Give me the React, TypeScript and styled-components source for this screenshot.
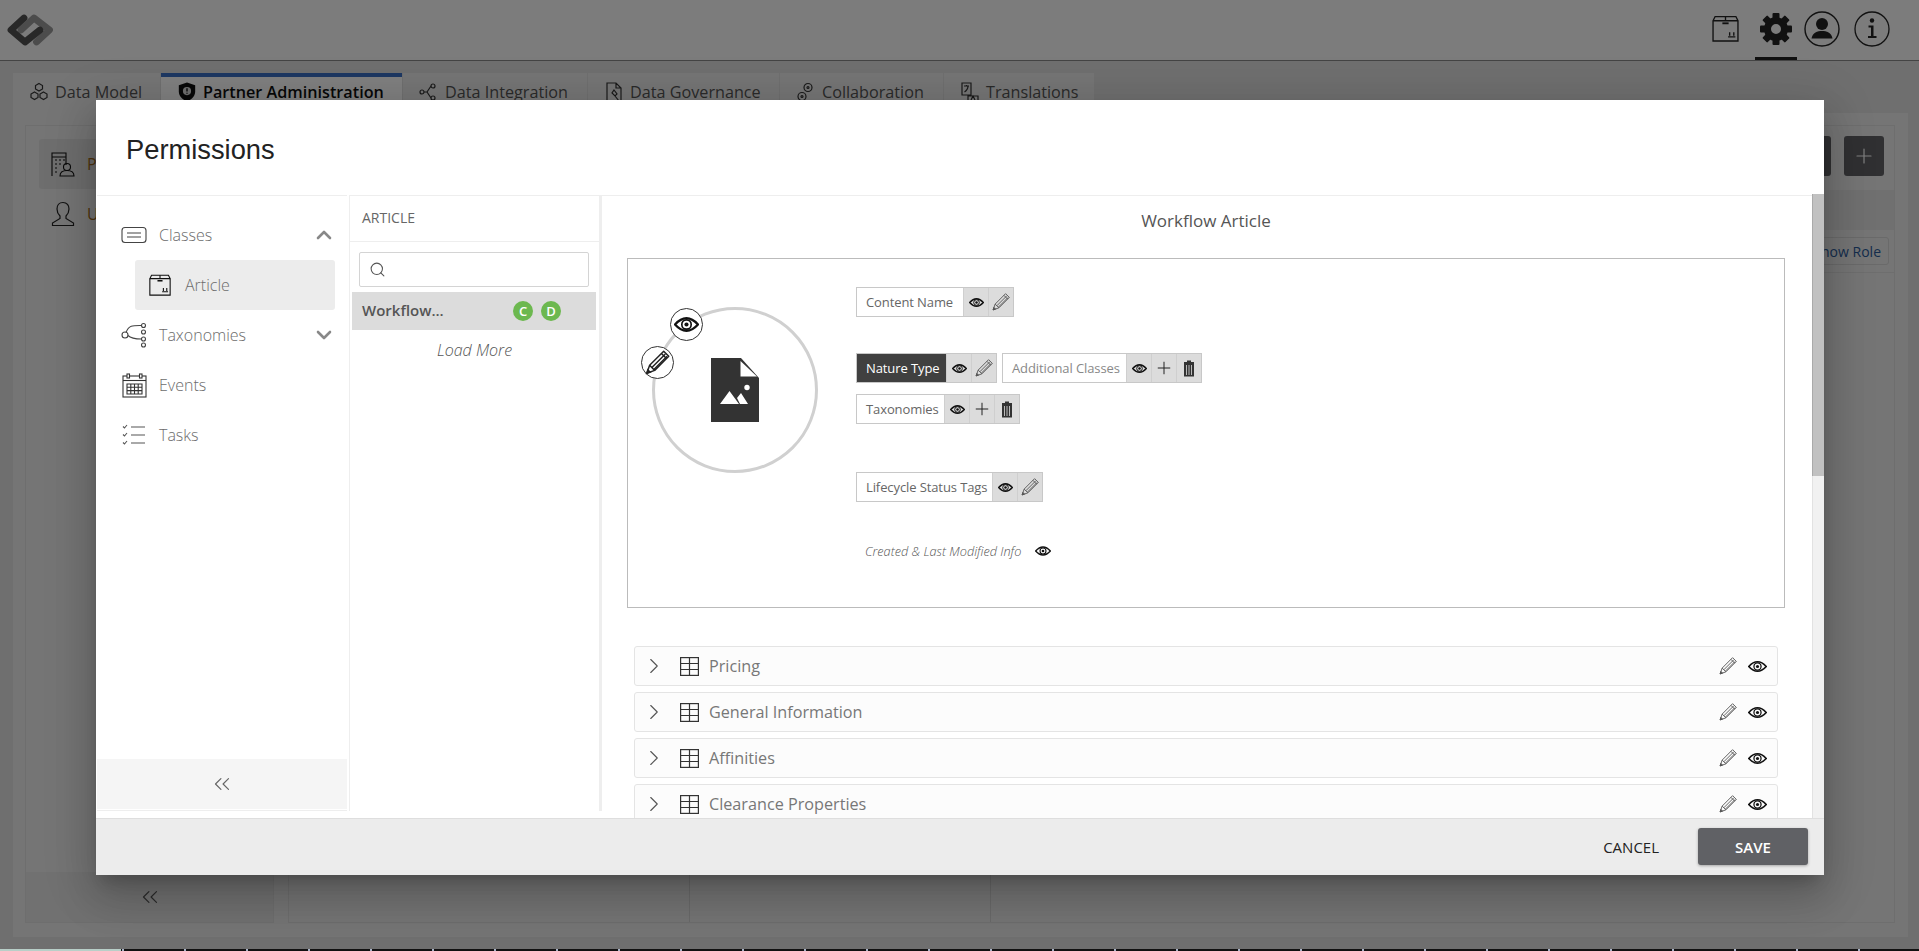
import React from 'react';
import styled, { createGlobalStyle } from 'styled-components';
import { ChevronDown, ChevronRight, ChevronUp, ChevronsLeft, Plus, Search } from 'lucide-react';

const GlobalStyle = createGlobalStyle`
  html, body {
    margin: 0;
    padding: 0;
    height: 100%;
    overflow: hidden;
    background: #fff;
    font-family: "Open Sans", "Liberation Sans", sans-serif;
  }
  * { box-sizing: border-box; }
`;

/* ---------- page behind the dialog ---------- */

const Page = styled.div`
  position: relative;
  width: 1919px;
  height: 951px;
  overflow: hidden;
`;

const Backdrop = styled.div`
  height: 949px;
  background-color: #dedede;
  display: flex;
  flex-direction: column;
`;

const BottomStrip = styled.div`
  height: 2px;
  background:
    linear-gradient(90deg, #b8cfc8 0 121px, transparent 121px),
    repeating-linear-gradient(90deg, #111 0 60px, #aab4c8 60px 62px);
`;

const Overlay = styled.div`
  position: absolute;
  left: 0;
  top: 0;
  width: 100%;
  height: 949px;
  background: rgba(0, 0, 0, 0.5);
`;

const TopBar = styled.header`
  height: 61px;
  flex: none;
  background-color: #f9f9f9;
  border-bottom: 1px solid #888;
  display: flex;
  align-items: center;
  justify-content: space-between;
  padding: 0 26px 0 7px;
`;

const TopIcons = styled.div`
  display: flex;
  align-items: center;
`;

const TopIcon = styled.div<{ $active?: boolean; $w: number }>`
  width: ${p => p.$w}px;
  height: 60px;
  display: flex;
  align-items: center;
  justify-content: center;
  color: #222;
  border-bottom: 3px solid ${p => (p.$active ? '#222' : 'transparent')};
`;

const TabRow = styled.nav`
  display: flex;
  flex: none;
  margin: 12px 0 0 13px;
  height: 40px;
`;

const Tab = styled.div<{ $active?: boolean; $w: number }>`
  width: ${p => p.$w}px;
  margin-right: 1px;
  display: flex;
  align-items: center;
  gap: 6px;
  padding: 0 0 7px 16px;
  font-size: 16.2px;
  font-weight: ${p => (p.$active ? 600 : 400)};
  color: ${p => (p.$active ? '#111' : '#555')};
  background-color: ${p => (p.$active ? '#fff' : '#ebebeb')};
  border-top: 4px solid ${p => (p.$active ? '#3a6fc4' : '#ebebeb')};
  white-space: nowrap;
`;

const Panel = styled.main`
  flex: 1;
  margin: 0 11px 12px 13px;
  padding: 12px 13px 14px 12px;
  background-color: #ebebeb;
  display: flex;
  gap: 14px;
`;

const SideColumn = styled.aside`
  width: 249px;
  border: 1px solid #dcdcdc;
  display: flex;
  flex-direction: column;
  padding: 13px 13px 0;
`;

const SideItem = styled.div<{ $active?: boolean }>`
  height: 50px;
  display: flex;
  align-items: center;
  gap: 12px;
  padding-left: 12px;
  font-size: 16px;
  color: #a06a20;
  border-radius: 3px;
  background-color: ${p => (p.$active ? '#dcdcdc' : 'transparent')};
`;

const SideCollapse = styled.div`
  margin: auto -13px 0;
  height: 50px;
  display: flex;
  align-items: center;
  justify-content: center;
  background-color: #e2e2e2;
  color: #555;
`;

const ContentColumn = styled.section`
  flex: 1;
  border: 1px solid #dcdcdc;
  display: flex;
  flex-direction: column;
`;

const Toolbar = styled.div`
  height: 64px;
  display: flex;
  justify-content: flex-end;
  align-items: center;
  gap: 13px;
  padding: 0 10px 4px 0;
`;

const DarkButton = styled.div`
  width: 40px;
  height: 40px;
  border-radius: 3px;
  background-color: #606165;
  color: #fff;
  display: flex;
  align-items: center;
  justify-content: center;
`;

const TableHead = styled.div`
  height: 40px;
  background-color: #e0e0e0;
`;

const TableRow = styled.div`
  height: 43px;
  display: flex;
  align-items: center;
  justify-content: flex-end;
  padding-right: 5px;
  border-bottom: 1px solid #dcdcdc;
`;

const ShowRole = styled.div`
  height: 28px;
  padding: 0 7px;
  display: flex;
  align-items: center;
  font-size: 14px;
  color: #2a5a9a;
  border: 1px solid #d4d4d4;
  border-radius: 3px;
`;

const TableBody = styled.div`
  flex: 1;
  display: grid;
  grid-template-columns: 401px 301px 1fr;
`;

const TableCell = styled.div`
  border-right: 1px solid #d4d4d4;
  &:last-child { border-right: none; }
`;

/* ---------- dialog ---------- */

const Modal = styled.div`
  position: absolute;
  left: 96px;
  top: 100px;
  width: 1728px;
  height: 775px;
  background-color: #fff;
  display: flex;
  flex-direction: column;
  box-shadow: 0 11px 15px -7px rgba(0, 0, 0, 0.2), 0 24px 38px 3px rgba(0, 0, 0, 0.14), 0 9px 46px 8px rgba(0, 0, 0, 0.12);
`;

const ModalHeader = styled.div`
  height: 95px;
  flex: none;
  display: flex;
  align-items: center;
  padding: 5px 0 0 30px;
  font-family: "Liberation Sans", Arial, sans-serif;
  font-size: 27.3px;
  color: #222;
`;

const ModalBody = styled.div`
  flex: 1;
  min-height: 0;
  display: flex;
`;

const ModalFooter = styled.div`
  height: 57px;
  flex: none;
  background-color: #ececec;
  border-top: 1px solid #dedede;
  display: flex;
  align-items: center;
  justify-content: flex-end;
  padding: 0 16px 1px 0;
`;

const CancelButton = styled.div`
  font-size: 15px;
  color: #222;
  margin-right: 39px;
`;

const SaveButton = styled.div`
  width: 110px;
  height: 37px;
  border-radius: 3px;
  background-color: #606165;
  color: #fff;
  font-size: 15px;
  font-weight: 600;
  display: flex;
  align-items: center;
  justify-content: center;
  box-shadow: 0 1px 3px rgba(0, 0, 0, 0.3);
`;

const NavColumn = styled.div`
  width: 250px;
  margin-left: 1px;
  margin-bottom: 7px;
  flex: none;
  border-top: 1px solid #eee;
  border-bottom: 1px solid #eee;
  display: flex;
  flex-direction: column;
  padding-top: 14px;
`;

const NavItem = styled.div`
  height: 50px;
  flex: none;
  display: flex;
  align-items: center;
  padding: 0 11px 0 24px;
  font-size: 16px;
  font-weight: 300;
  color: #6c6c6c;
  gap: 12px;
`;

const NavIconSlot = styled.span`
  width: 26px;
  display: flex;
  justify-content: center;
`;

const NavLabel = styled.span`
  flex: 1;
`;

const NavSubItem = styled.div`
  height: 50px;
  flex: none;
  margin-left: 38px;
  margin-right: 12px;
  border-radius: 3px;
  background-color: #ececec;
  display: flex;
  align-items: center;
  gap: 14px;
  padding-left: 14px;
  font-size: 16px;
  font-weight: 300;
  color: #6c6c6c;
`;

const NavCollapse = styled.div`
  margin-top: auto;
  margin-bottom: 1px;
  height: 50px;
  flex: none;
  background-color: #f5f5f5;
  display: flex;
  align-items: center;
  justify-content: center;
  color: #666;
`;

const ListColumn = styled.div`
  width: 250px;
  margin-left: 2px;
  margin-bottom: 7px;
  flex: none;
  border-left: 1px solid #eee;
  border-top: 1px solid #eee;
  display: flex;
  flex-direction: column;
`;

const ListHeader = styled.div`
  height: 46px;
  flex: none;
  display: flex;
  align-items: center;
  padding: 0 0 2px 12px;
  font-size: 14px;
  color: #666;
  border-bottom: 1px solid #eee;
`;

const SearchBox = styled.div`
  margin: 10px 10px 5px 9px;
  height: 35px;
  flex: none;
  border: 1px solid #d4d4d4;
  border-radius: 2px;
  display: flex;
  align-items: center;
  padding-left: 9px;
  color: #555;
`;

const ListRow = styled.div`
  margin: 0 3px 0 2px;
  height: 38px;
  flex: none;
  background-color: #dcdcdc;
  display: flex;
  align-items: center;
  padding: 0 0 3px 10px;
  font-size: 15px;
  font-weight: 600;
  color: #555;
`;

const ListRowLabel = styled.span`
  width: 151px;
`;

const Badge = styled.span`
  width: 20px;
  height: 20px;
  border-radius: 50%;
  margin: 3px 8px 0 0;
  background-color: #6cb84f;
  color: #fff;
  font-size: 13px;
  font-weight: 600;
  display: flex;
  align-items: center;
  justify-content: center;
`;

const LoadMore = styled.div`
  text-align: center;
  padding-top: 9px;
  font-size: 16px;
  font-weight: 300;
  font-style: italic;
  color: #555;
`;

const VerticalBar = styled.div`
  width: 3px;
  margin-bottom: 7px;
  flex: none;
  background-color: #eee;
`;

const MainColumn = styled.div`
  flex: 1;
  min-width: 0;
  overflow: hidden;
  padding: 0 27px 0 25px;
  border-top: 1px solid #eee;
`;

const MainTitle = styled.div`
  height: 62px;
  display: flex;
  align-items: center;
  justify-content: center;
  padding-bottom: 14px;
  font-size: 17px;
  color: #555;
`;

const ObjectBox = styled.div`
  height: 350px;
  border: 1px solid #bbb;
  display: grid;
  grid-template-columns: 228px 1fr;
`;

const CircleCell = styled.div`
  padding: 48px 0 0 24px;
`;

const Circle = styled.div`
  position: relative;
  width: 166px;
  height: 166px;
  border: 3px solid #d0d0d0;
  border-radius: 50%;
  display: flex;
  align-items: center;
  justify-content: center;
`;

const CircleBadge = styled.div<{ $x: number; $y: number }>`
  position: absolute;
  left: ${p => p.$x}px;
  top: ${p => p.$y}px;
  width: 33px;
  height: 33px;
  border: 1px solid #333;
  border-radius: 50%;
  background-color: #fff;
  display: flex;
  align-items: center;
  justify-content: center;
`;

const FieldsCell = styled.div`
  padding-top: 28px;
  display: flex;
  flex-direction: column;
  align-items: flex-start;
`;

const FieldRow = styled.div<{ $top?: number }>`
  display: flex;
  gap: 5px;
  margin-top: ${p => p.$top ?? 0}px;
`;

const Field = styled.div`
  height: 30px;
  display: flex;
  border: 1px solid #c8c8c8;
`;

const FieldLabel = styled.div<{ $dark?: boolean; $muted?: boolean; $w: number }>`
  width: ${p => p.$w}px;
  display: flex;
  align-items: center;
  padding-left: 9px;
  font-size: 13px;
  white-space: nowrap;
  letter-spacing: -0.1px;
  color: ${p => (p.$dark ? '#fff' : p.$muted ? '#888' : '#666')};
  background-color: ${p => (p.$dark ? '#404040' : '#fff')};
`;

const FieldAction = styled.div`
  width: 25px;
  display: flex;
  align-items: center;
  justify-content: center;
  background-color: #dcdcdc;
  border-left: 1px solid #cfcfcf;
  color: #222;
`;

const InfoRow = styled.div`
  margin-top: 40px;
  padding-left: 9px;
  display: flex;
  align-items: center;
  gap: 14px;
  font-size: 12.7px;
  font-weight: 300;
  font-style: italic;
  color: #555;
`;

const SectionList = styled.div`
  margin: 38px 7px 0;
  display: flex;
  flex-direction: column;
  gap: 6px;
`;

const SectionRow = styled.div`
  height: 40px;
  flex: none;
  border: 1px solid #e4e4e4;
  border-radius: 3px;
  background-color: #fcfcfc;
  display: flex;
  align-items: center;
  padding: 0 10px 0 6px;
  font-size: 16.2px;
  color: #777;
`;

const SectionLead = styled.span`
  margin-left: 13px;
  display: flex;
`;

const SectionLabel = styled.span`
  flex: 1;
  margin-left: 10px;
`;

const SectionActions = styled.div`
  display: flex;
  align-items: center;
  gap: 10px;
`;

const ScrollTrack = styled.div`
  width: 12px;
  flex: none;
  margin-top: -1px;
  background-color: #f1f1f1;
  border-left: 1px solid #e2e2e2;
`;

const ScrollThumb = styled.div`
  height: 282px;
  margin-left: -1px;
  background-color: #c1c1c1;
  border-left: 1px solid #aaa;
`;

/* ---------- drawings ---------- */

const Eye = ({ size = 16 }: { size?: number }) => (
  <svg width={size} height={size} viewBox="0 0 24 24" fill="none" stroke="#111">
    <path d="M1 12C5 7.500 8.500 6 12 6s7 1.500 11 6c-4 4.500-7.500 6-11 6S5 16.500 1 12z" strokeWidth="2.200" />
    <circle cx="12" cy="12" r="4.500" strokeWidth="1.600" />
    <circle cx="12" cy="12" r="2" fill="#111" stroke="none" />
  </svg>
);

const Pencil = ({ size = 20, color = '#555', line = 1.1 }: { size?: number; color?: string; line?: number }) => (
  <svg width={size} height={size} viewBox="0 0 24 24" fill="none" stroke={color} strokeWidth={line}>
    <path d="M2.500 21.500L5 14.500 17.500 2l4.500 4.500L9.500 19z" strokeLinejoin="round" />
    <path d="M7 16.500L19 4.500M5 14.500L9.500 19M15.500 4l4.500 4.500M9 18L20.500 6.500" />
    <path d="M2.500 21.500L3.400 18.500 5.500 20.600z" fill={color} />
  </svg>
);

const Trash = () => (
  <svg width="14" height="17" viewBox="0 0 14 17">
    <path d="M2 3h10v13.500H2z" fill="#333" />
    <path d="M5 0.500h4V2h3v1H2V2h3z" fill="#333" />
    <path d="M4.500 5v10M7 5v10M9.500 5v10" stroke="#ddd" strokeWidth="0.800" />
  </svg>
);

const GridIcon = () => (
  <svg width="19" height="19" viewBox="0 0 19 19" fill="none" stroke="#333" strokeWidth="1.200">
    <rect x="0.600" y="0.600" width="17.800" height="17.800" />
    <path d="M0.600 6.500h17.800M0.600 12.500h17.800M9.500 0.600v17.800" />
  </svg>
);

const BoxIcon = ({ w = 24, color = '#111' }: { w?: number; color?: string }) => (
  <svg width={w} height={w} viewBox="0 0 26 26" fill="none" stroke={color} strokeWidth="1.300">
    <path d="M1 5.500L3 1.500h20l2 4v19.500H1z" />
    <path d="M1 5.500h24M13 1.500v4" />
    <path d="M10 8h6" strokeWidth="1.800" />
    <path d="M15.500 21h7M17 20v-3.500M21 20v-3.500" />
  </svg>
);

const ClassesIcon = () => (
  <svg width="26" height="18" viewBox="0 0 26 18" fill="none" stroke="#444" strokeWidth="1.100">
    <rect x="1" y="1.500" width="24" height="15" rx="3" />
    <path d="M6 7h14M6 11h14" />
  </svg>
);

const TaxonomyIcon = () => (
  <svg width="26" height="26" viewBox="0 0 26 26" fill="none" stroke="#444" strokeWidth="1.100">
    <circle cx="4" cy="13" r="3" />
    <circle cx="22.500" cy="3.500" r="2" />
    <circle cx="22.500" cy="10" r="2" />
    <circle cx="22.500" cy="17" r="2" />
    <circle cx="22.500" cy="23" r="2" />
    <path d="M5 10.500C8 3 12 3.500 20.500 3.500M7 13.500c3 3 7 3.500 13.500 3.500" />
  </svg>
);

const CalendarIcon = () => (
  <svg width="25" height="25" viewBox="0 0 25 25" fill="none" stroke="#333" strokeWidth="1.100">
    <rect x="1" y="3" width="23" height="21" />
    <path d="M1 7.500h23" />
    <rect x="5" y="1" width="2.500" height="4" fill="#fff" />
    <rect x="17.500" y="1" width="2.500" height="4" fill="#fff" />
    <path d="M5 11h15v10H5zM5 14.300h15M5 17.600h15M8.800 11v10M12.500 11v10M16.200 11v10" />
  </svg>
);

const TasksIcon = () => (
  <svg width="24" height="22" viewBox="0 0 24 22" fill="none" stroke="#555" strokeWidth="1.100">
    <path d="M9 3h14M9 11h14M9 19h14" />
    <path d="M1 2.500l1.500 1.500L5 1M1 10.500L2.500 12 5 9M1 18.500L2.500 20 5 17" />
  </svg>
);

const FileImageIcon = () => (
  <svg width="48" height="64" viewBox="0 0 48 64">
    <path d="M0 0h30l18 20v44H0z" fill="#333" />
    <path d="M29.500 3v15.500H46z" fill="#fff" />
    <circle cx="36" cy="29.500" r="2.700" fill="#fff" />
    <path d="M9 46l9.500-13L28 46zM26 40l4-5 7 11h-8z" fill="#fff" />
  </svg>
);

const LogoIcon = () => (
  <svg width="48" height="36" viewBox="7 12 48 36" fill="none" strokeWidth="6.800" strokeLinecap="round" strokeLinejoin="round">
    <path d="M21 30L34 18l15.500 12-13 12" stroke="#999" />
    <path d="M24 18L11 30l14 12 15-12" stroke="#505050" />
  </svg>
);

const GearIcon = () => (
  <svg width="34" height="34" viewBox="-17 -17 34 34" fill="#222">
    <circle r="8.500" fill="none" stroke="#222" strokeWidth="7" />
    {[0, 45, 90, 135, 180, 225, 270, 315].map(a => (
      <rect key={a} x="-3.500" y="-16" width="7" height="7" rx="1" transform={`rotate(${a})`} />
    ))}
  </svg>
);

const UserRoundIcon = () => (
  <svg width="36" height="36" viewBox="0 0 36 36" fill="none" stroke="#222" strokeWidth="1.400">
    <circle cx="18" cy="18" r="17" />
    <circle cx="18" cy="13" r="6" fill="#222" stroke="none" />
    <path d="M7.500 27.500c1-6 6-7.500 10.500-7.500s9.500 1.500 10.500 7.500z" fill="#222" stroke="none" />
  </svg>
);

const InfoIcon = () => (
  <svg width="36" height="36" viewBox="0 0 36 36" fill="none" stroke="#222" strokeWidth="1.300">
    <circle cx="18" cy="18" r="17" />
    <circle cx="18" cy="9.500" r="2.200" fill="#222" stroke="none" />
    <path d="M14.500 14.500H19.500V25H22.500V27H14V25H17V16.500H14.500z" fill="#222" stroke="none" />
  </svg>
);

const TabIcon = ({ d, color = '#333', w = 20 }: { d: string; color?: string; w?: number }) => (
  <svg width={w} height={w} viewBox="0 0 20 20" fill="none" stroke={color} strokeWidth="1.200">
    <path d={d} />
  </svg>
);

const BuildingIcon = () => (
  <svg width="24" height="26" viewBox="0 0 24 26" fill="none" stroke="#111" strokeWidth="1.100">
    <path d="M1 25V2h14v12M1 6h14M4 9h2M8 9h2M12 9h2M4 13h2M8 13h2M4 17h2M4 21h2" />
    <circle cx="16" cy="16" r="3.500" />
    <path d="M9 25c0-4 3-5.500 7-5.500s7 1.500 7 5.500z" />
  </svg>
);

const UserOutlineIcon = () => (
  <svg width="24" height="26" viewBox="0 0 24 26" fill="none" stroke="#222" strokeWidth="1.200">
    <path d="M12 1.500c-4 0-6 3-6 6.500 0 3 1.500 5.500 3 7v2.500L1.500 22v2.500h21V22L15 17.500V15c1.500-1.500 3-4 3-7 0-3.500-2-6.500-6-6.500z" />
  </svg>
);

const SECTIONS = ['Pricing', 'General Information', 'Affinities', 'Clearance Properties'];

const App: React.FC = () => {
  return (
    <Page>
      <GlobalStyle />
      <Backdrop>
        <TopBar>
          <LogoIcon />
          <TopIcons>
            <TopIcon $w={42}><BoxIcon w={27} color="#222" /></TopIcon>
            <TopIcon $w={9} />
            <TopIcon $w={42} $active><GearIcon /></TopIcon>
            <TopIcon $w={2} />
            <TopIcon $w={46}><UserRoundIcon /></TopIcon>
            <TopIcon $w={6} />
            <TopIcon $w={42}><InfoIcon /></TopIcon>
          </TopIcons>
        </TopBar>
        <TabRow>
          <Tab $w={147}>
            <TabIcon d="M10 1.500l3.500 2v3.500L10 9 6.500 7V3.500zM5.500 10l3.500 2v3.500l-3.500 2-3.500-2V12zM14.500 10l3.500 2v3.500l-3.500 2-3.500-2V12z" />
            Data Model
          </Tab>
          <Tab $w={241} $active>
            <svg width="20" height="20" viewBox="0 0 20 22">
              <path d="M10 0.500l9 3v7c0 5-4 9-9 11-5-2-9-6-9-11v-7z" fill="#111" />
              <circle cx="10" cy="10" r="4.500" fill="#ddd" />
              <path d="M10 7v3.500M10 11.800v1" stroke="#111" strokeWidth="1.500" />
            </svg>
            Partner Administration
          </Tab>
          <Tab $w={184}>
            <TabIcon d="M1 10a2 2 0 1 0 4 0 2 2 0 1 0-4 0M5 10h3l4-6M8 10l4 6M12 4a2 2 0 1 0 4 0 2 2 0 1 0-4 0M12 16a2 2 0 1 0 4 0 2 2 0 1 0-4 0" />
            Data Integration
          </Tab>
          <Tab $w={191}>
            <TabIcon d="M3 1h9l5 5v13H3zM12 1v5h5M10 8l3 4-2 2-3-3zM11 14l4 5" />
            Data Governance
          </Tab>
          <Tab $w={163}>
            <TabIcon d="M12 1.500a4 4 0 1 1 0 8 4 4 0 1 1 0-8zM12 4.500a1 1 0 1 1 0 2 1 1 0 1 1 0-2zM6 10.500a4 4 0 1 1 0 8 4 4 0 1 1 0-8zM6 13.500a1 1 0 1 1 0 2 1 1 0 1 1 0-2z" />
            Collaboration
          </Tab>
          <Tab $w={150}>
            <TabIcon d="M2 1h9v12H2zM4 4h5M6.500 3v1M8 4c0 3-2 5-3.500 6M8 14h10v5H8zM11 18l2-4 2 4" />
            Translations
          </Tab>
        </TabRow>
        <Panel>
          <SideColumn>
            <SideItem $active><BuildingIcon />Partners</SideItem>
            <SideItem><UserOutlineIcon />Users</SideItem>
            <SideCollapse><ChevronsLeft size={26} strokeWidth={1.100} /></SideCollapse>
          </SideColumn>
          <ContentColumn>
            <Toolbar>
              <DarkButton />
              <DarkButton><Plus size={24} strokeWidth={1.200} /></DarkButton>
            </Toolbar>
            <TableHead />
            <TableRow><ShowRole>Show Role</ShowRole></TableRow>
            <TableBody>
              <TableCell />
              <TableCell />
              <TableCell />
            </TableBody>
          </ContentColumn>
        </Panel>
      </Backdrop>
      <BottomStrip />
      <Overlay />

      <Modal>
        <ModalHeader>Permissions</ModalHeader>
        <ModalBody>
          <NavColumn>
            <NavItem>
              <NavIconSlot><ClassesIcon /></NavIconSlot>
              <NavLabel>Classes</NavLabel>
              <ChevronUp size={24} strokeWidth={2.600} color="#888" />
            </NavItem>
            <NavSubItem><BoxIcon w={22} />Article</NavSubItem>
            <NavItem>
              <NavIconSlot><TaxonomyIcon /></NavIconSlot>
              <NavLabel>Taxonomies</NavLabel>
              <ChevronDown size={24} strokeWidth={2.600} color="#888" />
            </NavItem>
            <NavItem>
              <NavIconSlot><CalendarIcon /></NavIconSlot>
              <NavLabel>Events</NavLabel>
            </NavItem>
            <NavItem>
              <NavIconSlot><TasksIcon /></NavIconSlot>
              <NavLabel>Tasks</NavLabel>
            </NavItem>
            <NavCollapse><ChevronsLeft size={26} strokeWidth={1.100} /></NavCollapse>
          </NavColumn>
          <ListColumn>
            <ListHeader>ARTICLE</ListHeader>
            <SearchBox><Search size={17} strokeWidth={1.500} /></SearchBox>
            <ListRow>
              <ListRowLabel>Workflow...</ListRowLabel>
              <Badge>C</Badge>
              <Badge>D</Badge>
            </ListRow>
            <LoadMore>Load More</LoadMore>
          </ListColumn>
          <VerticalBar />
          <MainColumn>
            <MainTitle>Workflow Article</MainTitle>
            <ObjectBox>
              <CircleCell>
                <Circle>
                  <FileImageIcon />
                  <CircleBadge $x={15} $y={-2}><Eye size={25} /></CircleBadge>
                  <CircleBadge $x={-14} $y={36}><Pencil size={27} color="#222" line={1.3} /></CircleBadge>
                </Circle>
              </CircleCell>
              <FieldsCell>
                <FieldRow>
                  <Field>
                    <FieldLabel $w={106}>Content Name</FieldLabel>
                    <FieldAction><Eye size={15} /></FieldAction>
                    <FieldAction><Pencil /></FieldAction>
                  </Field>
                </FieldRow>
                <FieldRow $top={36}>
                  <Field>
                    <FieldLabel $dark $w={89}>Nature Type</FieldLabel>
                    <FieldAction><Eye size={15} /></FieldAction>
                    <FieldAction><Pencil /></FieldAction>
                  </Field>
                  <Field>
                    <FieldLabel $muted $w={123}>Additional Classes</FieldLabel>
                    <FieldAction><Eye size={15} /></FieldAction>
                    <FieldAction><Plus size={20} strokeWidth={1.200} /></FieldAction>
                    <FieldAction><Trash /></FieldAction>
                  </Field>
                </FieldRow>
                <FieldRow $top={11}>
                  <Field>
                    <FieldLabel $w={87}>Taxonomies</FieldLabel>
                    <FieldAction><Eye size={15} /></FieldAction>
                    <FieldAction><Plus size={20} strokeWidth={1.200} /></FieldAction>
                    <FieldAction><Trash /></FieldAction>
                  </Field>
                </FieldRow>
                <FieldRow $top={48}>
                  <Field>
                    <FieldLabel $w={135}>Lifecycle Status Tags</FieldLabel>
                    <FieldAction><Eye size={15} /></FieldAction>
                    <FieldAction><Pencil /></FieldAction>
                  </Field>
                </FieldRow>
                <InfoRow>Created &amp; Last Modified Info <Eye size={16} /></InfoRow>
              </FieldsCell>
            </ObjectBox>
            <SectionList>
              {SECTIONS.map(name => (
                <SectionRow key={name}>
                  <ChevronRight size={26} strokeWidth={1} color="#555" />
                  <SectionLead><GridIcon /></SectionLead>
                  <SectionLabel>{name}</SectionLabel>
                  <SectionActions>
                    <Pencil />
                    <Eye size={19} />
                  </SectionActions>
                </SectionRow>
              ))}
            </SectionList>
          </MainColumn>
          <ScrollTrack><ScrollThumb /></ScrollTrack>
        </ModalBody>
        <ModalFooter>
          <CancelButton>CANCEL</CancelButton>
          <SaveButton>SAVE</SaveButton>
        </ModalFooter>
      </Modal>
    </Page>
  );
};

export default App;
